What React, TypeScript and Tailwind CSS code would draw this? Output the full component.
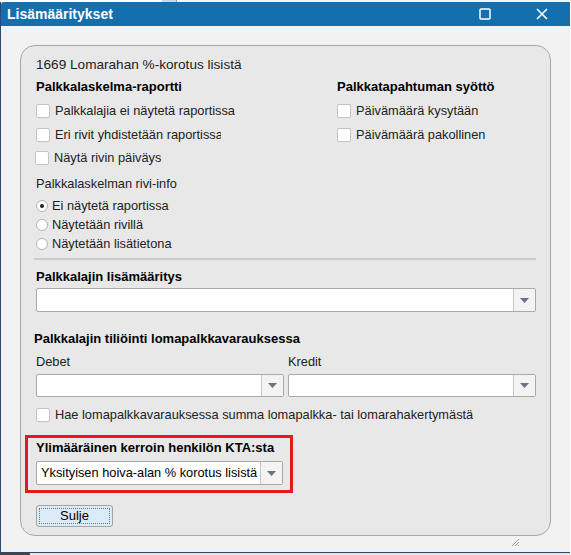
import React from "react";

const font = { fontFamily: '"Liberation Sans", Arial, sans-serif' };

function Checkbox({ label, className = "", clip }: { label: string; className?: string; clip?: string }) {
  return (
    <label className={`flex items-center gap-[5px] text-[12.8px] text-[#222] ${className}`}>
      <span className="w-[14px] h-[14px] bg-white border border-[#c4c4c4] rounded-[2px] shrink-0" />
      <span className={`whitespace-nowrap overflow-hidden ${clip ?? ""}`}>{label}</span>
    </label>
  );
}

function Radio({ label, checked }: { label: string; checked?: boolean }) {
  return (
    <label className="flex items-center gap-[4px] h-[19px] text-[12.8px] text-[#222]">
      <span className="w-[12px] h-[12px] rounded-full bg-white border border-[#b4b4b4] flex items-center justify-center shrink-0">
        {checked && <span className="w-[4px] h-[4px] rounded-full bg-[#222]" />}
      </span>
      <span className="whitespace-nowrap">{label}</span>
    </label>
  );
}

function Select({ value = "", className = "", h = "h-[24px]" }: { value?: string; className?: string; h?: string }) {
  return (
    <div className={`flex bg-white border border-[#a9a9a9] rounded-[2px] ${h} ${className}`}>
      <div className="flex-1 flex items-center pl-[4px] text-[12.8px] text-black overflow-hidden whitespace-nowrap">
        {value}
      </div>
      <div className="w-[22px] bg-[#f3f3f3] border-l border-[#c6c6c6] flex items-center justify-center">
        <svg width="9" height="5" viewBox="0 0 9 5">
          <path d="M0 0 L9 0 L4.5 5 Z" fill="#6b7185" />
        </svg>
      </div>
    </div>
  );
}

export default function App() {
  return (
    <div className="w-[571px] h-[555px] bg-white overflow-hidden relative" style={font}>
      {/* taustasovellus */}
      <div className="h-[2px] flex">
        <div className="w-[162px] bg-white" />
        <div className="w-[14px] bg-[#c9d8ea]" />
        <div className="w-[1px] bg-[#999]" />
        <div className="flex-1 bg-[#f4f4f4]" />
      </div>

      {/* dialogi */}
      <div className="h-[551px] w-[570px] flex flex-col bg-[#f2f2f2] border-l border-b border-[#2b4a72]">
        <div className="h-[24px] bg-[#146fae] rounded-tl-[3px] flex items-center pl-[6px] pr-[22px] text-white">
          <span className="text-[14px] font-bold">Lisämääritykset</span>
          <svg className="ml-auto" width="12" height="12" viewBox="0 0 12 12">
            <rect x="1" y="1" width="10" height="10" rx="1" fill="none" stroke="white" strokeWidth="1.5" />
          </svg>
          <svg className="ml-[45px]" width="12" height="12" viewBox="0 0 12 12">
            <path d="M1 1 L11 11 M11 1 L1 11" stroke="white" strokeWidth="1.6" />
          </svg>
        </div>

        <div className="flex-1 relative pt-[19px] pl-[19px]">
          <div className="w-[531px] h-[491px] bg-[#e8e8e8] border border-[#a8a8a8] rounded-[15px] pt-[11px] pl-[15px] pr-[14px] flex flex-col">
            <div className="h-[16px] flex items-center text-[13.6px] text-[#222]">1669 Lomarahan %-korotus lisistä</div>

            <div className="flex mt-[6px]">
              <div className="w-[301px] flex flex-col">
                <div className="h-[16px] flex items-center text-[13px] font-bold text-black">Palkkalaskelma-raportti</div>
                <div className="mt-[4px] flex flex-col">
                  <Checkbox label="Palkkalajia ei näytetä raportissa" className="h-[24px]" />
                  <Checkbox label="Eri rivit yhdistetään raportissa" className="h-[23px]" clip="w-[166px]" />
                  <Checkbox label="Näytä rivin päiväys" className="h-[24px] -ml-[1px]" />
                </div>
              </div>
              <div className="flex flex-col">
                <div className="h-[16px] flex items-center text-[13px] font-bold text-black">Palkkatapahtuman syöttö</div>
                <div className="mt-[4px] flex flex-col">
                  <Checkbox label="Päivämäärä kysytään" className="h-[24px]" />
                  <Checkbox label="Päivämäärä pakollinen" className="h-[23px]" />
                </div>
              </div>
            </div>

            <div className="h-[16px] mt-[6px] flex items-center text-[12.8px] text-[#222]">Palkkalaskelman rivi-info</div>
            <div className="mt-[4px] flex flex-col">
              <Radio label="Ei näytetä raportissa" checked />
              <Radio label="Näytetään rivillä" />
              <Radio label="Näytetään lisätietona" />
            </div>

            <div className="h-[2px] bg-[#cbcbcb] mt-[5px] -ml-[2px]" />

            <div className="h-[16px] mt-[9px] flex items-center text-[13px] font-bold text-black">Palkkalajin lisämääritys</div>
            <Select className="mt-[3px]" />

            <div className="h-[16px] mt-[19px] -ml-[2px] flex items-center text-[13px] font-bold text-black whitespace-nowrap">
              Palkkalajin tiliöinti lomapalkkavarauksessa
            </div>
            <div className="flex mt-[7px]">
              <div className="w-[252px] flex flex-col">
                <div className="h-[16px] flex items-center text-[12.8px] text-[#222]">Debet</div>
                <Select className="mt-[4px] w-[248px]" h="h-[23px]" />
              </div>
              <div className="flex-1 flex flex-col">
                <div className="h-[16px] flex items-center text-[12.8px] text-[#222]">Kredit</div>
                <Select className="mt-[4px]" h="h-[23px]" />
              </div>
            </div>

            <Checkbox label="Hae lomapalkkavarauksessa summa lomapalkka- tai lomarahakertymästä" className="h-[20px] mt-[8px]" />

            <div className="mt-[10px] -ml-[11px] w-[268px] h-[58px] border-[3px] border-[#e3191c] pt-[2px] pl-[8px] pr-[7px] flex flex-col">
              <div className="h-[16px] flex items-center text-[13px] font-bold text-black whitespace-nowrap">
                Ylimääräinen kerroin henkilön KTA:sta
              </div>
              <Select className="mt-[5px]" value="Yksityisen hoiva-alan % korotus lisistä" />
            </div>

            <button className="mt-[12px] w-[77px] h-[22px] bg-[#d9eaf9] border border-[#a3a3a3] rounded-[3px] p-[2px] text-[13px] text-black">
              <span className="flex w-full h-full items-center justify-center border border-dotted border-[#777]">Sulje</span>
            </button>
          </div>

          <svg className="absolute right-[50px] bottom-[5px]" width="9" height="9" viewBox="0 0 9 9">
            <path d="M8 1 L1 8 M8 4 L4 8 M8 7 L7 8" stroke="#9a9a9a" strokeWidth="1" />
          </svg>
        </div>
      </div>
      <div className="h-[2px] flex">
        <div className="w-[30px] bg-[#444]" />
        <div className="flex-1 bg-[#e6e6e6]" />
      </div>
    </div>
  );
}
